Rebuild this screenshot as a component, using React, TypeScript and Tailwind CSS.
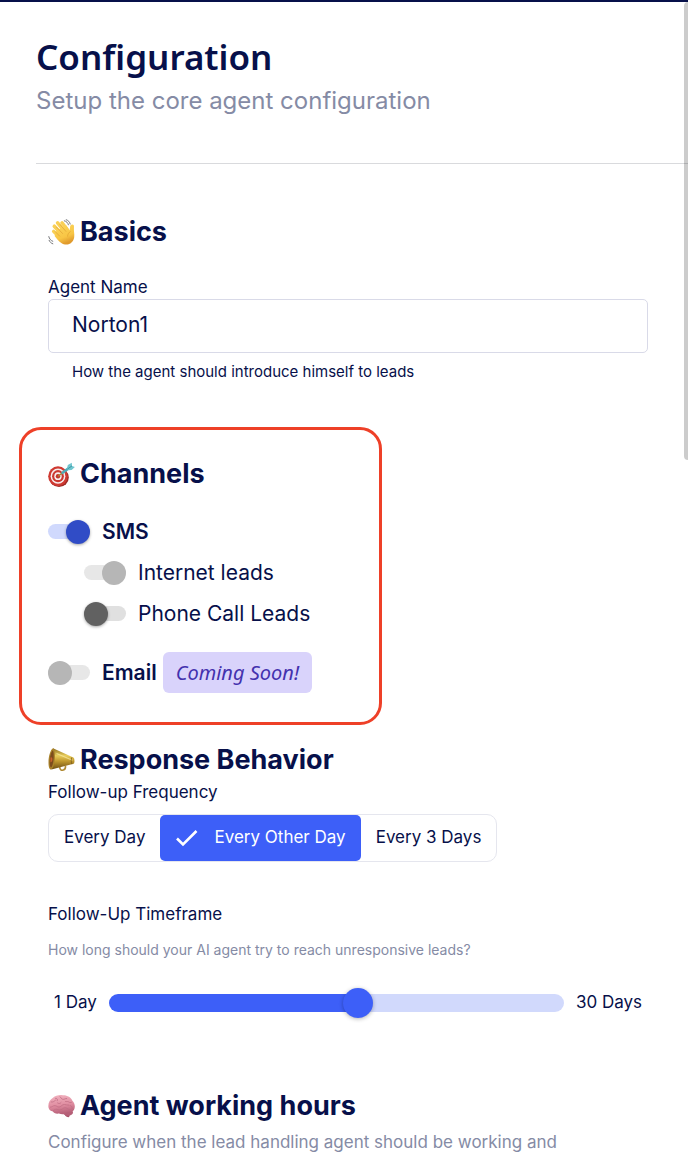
import { useState } from 'react';
import type { ReactNode } from 'react';

function WaveIcon() {
  return (
    <svg viewBox="0 0 27 27" className="size-[27px] shrink-0" aria-hidden="true">
      <defs>
        <linearGradient id="wave" x1="0" y1="0" x2="0.4" y2="1">
          <stop offset="0" stopColor="#fbd65c" />
          <stop offset="0.7" stopColor="#f8c544" />
          <stop offset="1" stopColor="#e09a2c" />
        </linearGradient>
      </defs>
      <g stroke="#f9cf55" strokeLinecap="round" fill="none">
        <path d="M6.3 7.2l7.5 8" strokeWidth="3.6" />
        <path d="M9.6 3.9l7 8.4" strokeWidth="3.6" />
        <path d="M14 3.8l5.4 7" strokeWidth="3.4" />
        <path d="M5.6 12.4l6 6" strokeWidth="3.4" />
        <path d="M24.2 7.4l-.7 7" strokeWidth="3.6" />
      </g>
      <path d="M8.5 11.5l9.8-5.3 3.1 5 1.2-4.4c.8-1.5 3-.8 3 1 0 3.5 1.1 6.9.6 10.5-.6 4.500-4 7.300-7.600 7.300-4.200 0-6.700-2.600-9.200-5.200L6.600 17z" fill="url(#wave)" />
      <path d="M8.300 8l6.300 6.500M11.900 5.500l6 6.900M7.300 12.700l4.300 4.400M19.600 17.200c.1-2.200 1.100-3.500 2.700-4.600" stroke="#dc9b2f" strokeWidth="0.6" fill="none" strokeLinecap="round" />
      <path d="M16.300 1.800c2.100.4 3.600 1.900 4.100 4M18.200.7c2.200.8 3.500 2.200 4 4.300M.8 17.600c.5 2.300 1.900 3.900 4 4.700M1.100 21.300c.7 1.700 1.900 2.900 3.700 3.500" stroke="#77787c" strokeWidth="1" fill="none" strokeLinecap="round" />
    </svg>
  );
}

function TargetIcon() {
  return (
    <svg viewBox="0 0 27 27" className="size-[27px] shrink-0" aria-hidden="true">
      <ellipse cx="11" cy="16.5" rx="9.8" ry="9.5" fill="#9d2a25" />
      <ellipse cx="10" cy="15.2" rx="9.8" ry="10" fill="#cf3a32" />
      <ellipse cx="10" cy="15.2" rx="7.4" ry="7.6" fill="#f7eeee" />
      <ellipse cx="10" cy="15.2" rx="5.9" ry="6.1" fill="#cc3830" />
      <ellipse cx="10" cy="15.2" rx="3.7" ry="3.9" fill="#f7eeee" />
      <ellipse cx="10" cy="15.2" rx="2.2" ry="2.3" fill="#c4332c" />
      <path d="M10.5 15l5.2-4.2" stroke="#a9822f" strokeWidth="1.5" strokeLinecap="round" />
      <path d="M14.6 11.800l6.200-4.700" stroke="#4fabb8" strokeWidth="2.6" strokeLinecap="round" />
      <path d="M19 7.600L19.800 4l4-2.200.2 3.100 2.900 1-3.300 3.200-4 .2z" fill="#6fc6cf" />
      <path d="M19.500 8l4.500-3.100" stroke="#3b8d9d" strokeWidth="0.9" />
    </svg>
  );
}

function MegaphoneIcon() {
  return (
    <svg viewBox="0 1 27 27" className="size-[27px] shrink-0" aria-hidden="true">
      <defs>
        <linearGradient id="brass" x1="0" y1="0" x2="0" y2="1">
          <stop offset="0" stopColor="#8b6a1c" />
          <stop offset="0.35" stopColor="#e8cd5b" />
          <stop offset="0.6" stopColor="#c29a2f" />
          <stop offset="1" stopColor="#6d4d12" />
        </linearGradient>
      </defs>
      <path d="M11.6 20.5c.2 3.300 1.900 4.200 3.700 3.600 1.800-.5 2.400-2.200 2.200-4.400" fill="none" stroke="#b08a33" strokeWidth="1.6" />
      <path d="M5 2.200L25.400 11.600c1.400.8 1.400 6 .2 6.200L3.400 23.500z" fill="url(#brass)" />
      <path d="M5 2.200C2.500 3.500.5 10 .5 16.500c0 4.500 1 7 2.400 7 2 0 3.700-5.500 4-11.500.2-5.300-.5-9.500-1.900-9.800z" fill="#a9822a" />
      <path d="M4.600 4.600C2.800 6.600 1.700 11.500 1.700 16c0 3.200.5 5.500 1.300 5.500 1.300-.2 2.500-5.200 2.700-10 .1-3.700-.2-6.800-1.100-6.900z" fill="#7d4c1d" />
      <path d="M2.500 11.500c1-.7 2 .2 1.900 2-.1 1.900-1.100 3-2 2.700z" fill="#c9602c" />
      <path d="M8.500 7.500l16 6.800" stroke="#f7e79a" strokeWidth="1.2" opacity="0.8" />
      <path d="M23.800 11.400c-.8 1.600-.7 5.200.1 6.800" stroke="#705217" strokeWidth="0.7" fill="none" />
    </svg>
  );
}

function BrainIcon() {
  return (
    <svg viewBox="0 0 27 27" className="size-[27px] shrink-0" aria-hidden="true">
      <defs>
        <linearGradient id="brain" x1="0" y1="0" x2="0.2" y2="1">
          <stop offset="0" stopColor="#f3b6c2" />
          <stop offset="0.6" stopColor="#df8ca0" />
          <stop offset="1" stopColor="#b9627a" />
        </linearGradient>
      </defs>
      <path d="M15.5 19c.8 2.800 2.500 5.300 4.700 5.300 1.500 0 1.600-2 1.300-4.300z" fill="#a9526a" />
      <ellipse cx="20" cy="19.5" rx="5" ry="3.2" fill="#b55f77" />
      <path d="M.5 14.500C-.2 10.500 1.800 6.500 5 4.800c2.500-2.300 6.500-3.300 10-2.500 4.200-.2 8 2.200 9.400 5.400 2.600 2.600 3.100 6.800 1.500 9.400-1.300 2.100-4 2.600-6.600 2.200-2.300 2.400-5.700 2.500-8.300 1.300-3 .5-5.300-.4-6.300-2.300C2.700 18.300.9 16.800.5 14.500z" fill="url(#brain)" />
      <path d="M3.200 9c2 .5 2.900-.8 4.300-1.800M7.500 5.300c1.500-.3 2.400 1 1.800 2.400M12 3.700c1.200.5 1 2.300 2.800 2.600s2.300-1 3.900-.8M2.400 14.200c1.900-.2 2.800-1.700 4.600-1.500 2 .2 2.300 1.700 4.300 1.300 2.300-.5 2.700-2.500 5.200-2.500 1.800 0 2.700.9 4.200.7M9.600 10c1.200.9 2.600.7 3.500-.5M17.500 8.500c1.300.3 2.400-.3 3.200.4s1.700.9 2.700.5M5.200 17.900c1.200-1.900 3-1.800 4.800-1.200 2.200.7 3.900-.3 5.400-1.400 1.700-1.200 3.500-.2 4.600.7s2.700.8 4.200-.3M22 12.500c1.300.3 2 1.100 2.200 2.200" fill="none" stroke="#c06d84" strokeWidth="0.8" strokeLinecap="round" />
    </svg>
  );
}

function SectionTitle({ icon, children }: { icon: ReactNode; children: ReactNode }) {
  return (
    <h2 className="flex items-center gap-[5px] text-[27px] leading-9 font-bold">
      {icon}
      {children}
    </h2>
  );
}

interface SwitchRowProps {
  label: string;
  defaultChecked?: boolean;
  disabled?: boolean;
  bold?: boolean;
}

function SwitchRow({ label, defaultChecked, disabled, bold }: SwitchRowProps) {
  return (
    <label className="flex h-[41px] items-center gap-3">
      <input
        type="checkbox"
        role="switch"
        defaultChecked={defaultChecked}
        disabled={disabled}
        className="flex h-6 w-[42px] shrink-0 appearance-none items-center before:h-[15px] before:w-full before:rounded-full before:bg-[#e0e0e0] after:-ml-[42px] after:size-6 after:shrink-0 after:rounded-full after:bg-[#616161] after:shadow-[0_1px_3px_rgba(0,0,0,0.35)] checked:before:bg-[#d0d9fd] checked:after:-ml-6 checked:after:bg-[#304cc6] disabled:before:bg-[#e7e7e7] disabled:after:bg-[#b6b6b6] disabled:after:shadow-none"
      />
      <span className={bold ? 'text-[21px] leading-7 font-semibold' : 'text-[21px] leading-7'}>{label}</span>
    </label>
  );
}

const frequencies = ['Every Day', 'Every Other Day', 'Every 3 Days'];

export default function App() {
  const [frequency, setFrequency] = useState('Every Other Day');
  const [days, setDays] = useState(17);
  const percent = ((days - 1) / 29) * 100;

  return (
    <div className="relative border-t-2 border-[#07104a] bg-white font-['Inter',sans-serif] text-[#07104a]">
      {/* Scrollbar thumb */}
      <div className="absolute top-0 right-0 h-[458px] w-1 rounded-l bg-black/20" />

      <header className="ml-9 border-b border-[#d9dadd] pt-[31px] pb-[46px]">
        <h1 className="font-['Noto_Sans',sans-serif] text-[35px] leading-[48px] font-semibold">Configuration</h1>
        <p className="mt-1 text-2xl leading-8 text-[#858ba5]">Setup the core agent configuration</p>
      </header>

      <main>
        <section className="pt-[50px] pr-10 pl-12">
          <SectionTitle icon={<WaveIcon />}>Basics</SectionTitle>
          <label htmlFor="agent-name" className="mt-[25px] block text-[17px] leading-6">
            Agent Name
          </label>
          <input
            id="agent-name"
            type="text"
            defaultValue="Norton1"
            aria-describedby="agent-name-help"
            className="h-[54px] w-full rounded-[5px] border border-[#d9dae8] px-[23px] pb-[3px] text-[21px]"
          />
          <p id="agent-name-help" className="mt-[9px] pl-6 text-[15px] leading-5">
            How the agent should introduce himself to leads
          </p>
        </section>

        <section className="mt-[45px] ml-[19px] max-w-[363px] rounded-[22px] border-[3px] border-[#ee4028] px-[26px] pt-[26px] pb-[29px]">
          <SectionTitle icon={<TargetIcon />}>Channels</SectionTitle>
          <div className="mt-[19px]">
            <SwitchRow label="SMS" defaultChecked bold />
            <div className="pl-9">
              <SwitchRow label="Internet leads" defaultChecked disabled />
              <SwitchRow label="Phone Call Leads" />
            </div>
          </div>
          <div className="mt-[18px] flex items-center gap-1.5">
            <SwitchRow label="Email" disabled bold />
            <span className="rounded-md bg-[#d9d3fb] px-[13px] py-1.5 font-['Noto_Sans',sans-serif] text-[20px] leading-[29px] whitespace-nowrap text-[#4331ae] italic">
              Coming Soon!
            </span>
          </div>
        </section>

        <section className="mt-[17px] pr-10 pl-12">
          <SectionTitle icon={<MegaphoneIcon />}>Response Behavior</SectionTitle>
          <p id="frequency" className="mt-0.5 text-[17px] leading-6">
            Follow-up Frequency
          </p>
          <div
            role="group"
            aria-labelledby="frequency"
            className="mt-2.5 flex h-12 w-fit rounded-[10px] border border-[#e5e6ee] text-[17px] whitespace-nowrap"
          >
            {frequencies.map((item) => (
              <button
                key={item}
                type="button"
                aria-pressed={frequency === item}
                onClick={() => setFrequency(item)}
                className={
                  frequency === item
                    ? 'flex items-center gap-[15px] rounded-[5px] bg-[#3d5ff8] px-[15px] text-white'
                    : 'px-[15px]'
                }
              >
                {frequency === item && (
                  <svg viewBox="0 0 24 18" className="h-[18px] w-6" aria-hidden="true">
                    <path d="M2 9.5l6 6L21.5 2" fill="none" stroke="currentColor" strokeWidth="2.6" />
                  </svg>
                )}
                {item}
              </button>
            ))}
          </div>

          <label htmlFor="timeframe" className="mt-10 block text-[17px] leading-6">
            Follow-Up Timeframe
          </label>
          <p className="mt-3.5 text-[14px] leading-5 text-[#858ba5]">
            How long should your AI agent try to reach unresponsive leads?
          </p>
          <div className="mt-7 flex h-[30px] items-center gap-3 px-1.5 text-[17px] whitespace-nowrap">
            <span>1 Day</span>
            <input
              id="timeframe"
              type="range"
              min={1}
              max={30}
              value={days}
              onChange={(e) => setDays(Number(e.target.value))}
              className="h-[18px] min-w-0 flex-1 appearance-none rounded-full [&::-webkit-slider-thumb]:size-[30px] [&::-webkit-slider-thumb]:appearance-none [&::-webkit-slider-thumb]:rounded-full [&::-webkit-slider-thumb]:bg-[#3d5ff8] [&::-webkit-slider-thumb]:shadow-[0_1px_4px_rgba(0,0,0,0.3)]"
              style={{ background: `linear-gradient(to right, #3d5ff8 ${percent}%, #d1d9fc ${percent}%)` }}
            />
            <span>30 Days</span>
          </div>
        </section>

        <section className="mt-[70px] pr-10 pb-1 pl-12">
          <SectionTitle icon={<BrainIcon />}>Agent working hours</SectionTitle>
          <p className="mt-1.5 text-[17px] leading-6 text-[#858ba5]">
            Configure when the lead handling agent should be working and
          </p>
        </section>
      </main>
    </div>
  );
}
